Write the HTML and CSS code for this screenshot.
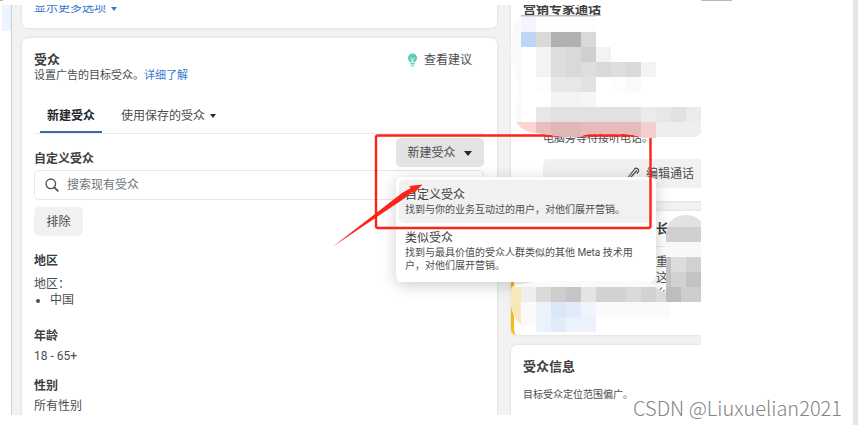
FILE: index.html
```
<!DOCTYPE html>
<html lang="zh-CN">
<head>
  <meta charset="UTF-8">
  <meta name="viewport" content="width=device-width, initial-scale=1.0">
  <title>受众</title>
  <link rel="stylesheet" href="styles.css">
</head>
<body>

<div class="page">
  <div class="rail"><div class="rail-active"></div></div>

  <div class="app">
    <div class="columns">
      <main class="main">
        <section class="card more-card">
          <a href="#" class="more-link">显示更多选项 <span class="caret small"></span></a>
        </section>

        <section class="card audience-card">
          <div class="title-row">
            <h2>受众</h2>
            <button type="button" class="tips">
              <svg width="11" height="14" viewBox="0 0 11 14">
                <path d="M5.500 0.500a4.600 4.600 0 0 0-4.600 4.600c0 1.900 1.200 2.700 2 4.100h5.200c.8-1.400 2-2.200 2-4.100a4.600 4.600 0 0 0-4.600-4.600z" fill="#62cdb7"/>
                <path d="M3.800 4.800l1.200 2v2.400M7.200 4.800l-1.200 2v2.400" fill="none" stroke="#e6f8f4" stroke-width="0.900"/>
                <path d="M3.200 10.500h4.600M3.600 12h3.800M4.600 13.300h1.800" stroke="#62cdb7" stroke-width="1"/>
              </svg>
              查看建议
            </button>
          </div>
          <p class="intro">设置广告的目标受众。<a href="#">详细了解</a></p>

          <div class="tabs">
            <button type="button" class="tab active">新建受众</button>
            <button type="button" class="tab">使用保存的受众 <span class="caret small"></span></button>
          </div>

          <div class="label-row">
            <label for="audienceSearch">自定义受众</label>
            <div class="create">
              <button type="button" class="create-button">新建受众 <span class="caret"></span></button>
              <div class="menu">
                <button type="button" class="menu-item selected">
                  <span class="menu-title">自定义受众</span>
                  <span class="menu-text">找到与你的业务互动过的用户，对他们展开营销。</span>
                </button>
                <button type="button" class="menu-item">
                  <span class="menu-title">类似受众</span>
                  <span class="menu-text">找到与最具价值的受众人群类似的其他 Meta 技术用户，对他们展开营销。</span>
                </button>
              </div>
            </div>
          </div>

          <div class="search">
            <svg width="14" height="14" viewBox="0 0 14 14">
              <circle cx="5.800" cy="5.800" r="4.800" fill="none" stroke="#4c5157" stroke-width="1.300"/>
              <path d="M9.300 9.300l4 4" stroke="#4c5157" stroke-width="1.700"/>
            </svg>
            <input type="text" id="audienceSearch" placeholder="搜索现有受众">
          </div>
          <button type="button" class="exclude">排除</button>

          <h3>地区</h3>
          <p class="value">地区：</p>
          <ul>
            <li>中国</li>
          </ul>

          <h3 class="after-list">年龄</h3>
          <p class="value tight">18 - 65+</p>

          <h3>性别</h3>
          <p class="value tight">所有性别</p>
        </section>
      </main>

      <aside class="side">
        <section class="card call-card">
          <h2>营销专家通话</h2>
          <div class="call-body">
            <p>电脑旁等待接听电话。</p>
            <button type="button" class="edit-call">
              <svg width="14" height="13" viewBox="0 0 14 13">
                <path d="M1 12l7.300-9.500a2.200 2.200 0 0 1 4 2.200l-1.500 2M3.300 12l7.500-8.500M1 12h2.300" fill="none" stroke="#4b4f56" stroke-width="1.200"/>
              </svg>
              编辑通话
            </button>
          </div>
        </section>

        <section class="card notice-card">
          <h2>长</h2>
          <p>重<br>这<br>么</p>
        </section>

        <section class="card info-card">
          <h2>受众信息</h2>
          <p>目标受众定位范围偏广。</p>
        </section>
      </aside>
    </div>
  </div>

  <div class="margin"></div>
  <div class="edge"></div>
</div>

<!-- red callout and arrow, then the pixelated areas above it -->
<svg class="notes" width="858" height="425" viewBox="0 0 858 425">
  <path d="M0 0.500h3M701 0.500h31" stroke="#b9b9b9"/>
  <rect x="376" y="135.500" width="274.500" height="92.500" rx="2" fill="none" stroke="#fb2418" stroke-width="2.400"/>
  <path d="M333 246.500L402 193l9-5-2-2 13.500-1.500-9.500 9.500-1-2-7 6z" fill="#fb2418"/>

  <defs>
    <clipPath id="blurTop">
      <path d="M521 16h180v117q-3 4-8 4h-37v1h-13q-10-4-20-4h-33q-6 0-9 2.500h-20q-12-2-25-3.500-14-1-20-11l1-4q-4-15 2-22l-1-10q-5-8-1-16-10-12-5-26-2-20 9-28z"/>
    </clipPath>
    <clipPath id="blurBottom">
      <path d="M512 287q14-6 45-6h87q8 0 12 6 4 5 10 5v-59q2-18 21-18 8 0 14 6v81h-31v16q0 8 20 14l-10 2h-144v-9h-15q-14-13-9-38z"/>
    </clipPath>
  </defs>

  <g clip-path="url(#blurTop)" shape-rendering="crispEdges">
    <path d="M505 16h16v106h-16z" fill="#fafafa"/>
    <path d="M521 16h180v121H521z" fill="#fff"/>
    <path d="M521 17h15v15h-15z" fill="#f3f6fe"/>
    <path d="M536 17h60v15h-60zM536 77h15v15h-15zM611 77h15v15h-15z" fill="#fdfdfd"/>
    <path d="M521 32h15v15h-15z" fill="#bfd5f5"/>
    <path d="M551 32h30v15h-30z" fill="#b1b1b1"/>
    <path d="M581 47h15v15h-15z" fill="#cfcfcf"/>
    <path d="M536 32h15v15h-15zM581 32h15v15h-15zM566 47h15v30h-15zM596 62h15v15h-15zM626 62h15v15h-15z" fill="#d9d9d9"/>
    <path d="M551 47h15v30h-15zM581 62h15v15h-15zM611 62h15v15h-15z" fill="#dedede"/>
    <path d="M536 47h15v30h-15zM596 47h15v15h-15zM641 62h15v15h-15zM551 92h30v15h-30z" fill="#f3f3f3"/>
    <path d="M551 77h30v15h-30zM536 107h15v15h-15zM656 107h15v15h-15z" fill="#e7e7e7"/>
    <path d="M581 77h15v15h-15z" fill="#e2e2e2"/>
    <path d="M626 77h15v15h-15z" fill="#fafafa"/>
    <path d="M581 92h15v15h-15z" fill="#f6f6f6"/>
    <path d="M551 107h90v15h-90zM671 107h15v15h-15z" fill="#e1e1e1"/>
    <path d="M641 107h15v15h-15zM686 107h15v15h-15z" fill="#ebebeb"/>
    <path d="M505 122h31v16h-31z" fill="#ffd3d1"/>
    <path d="M536 122h15v16h-15z" fill="#e9bdbb"/>
    <path d="M551 122h30v16h-30z" fill="#dfb8b6"/>
    <path d="M581 122h60v16h-60z" fill="#e5bcba"/>
    <path d="M641 122h15v16h-15z" fill="#f3cfcd"/>
    <path d="M656 122h45v16h-45z" fill="#eee"/>
  </g>
  <path d="M521 16h75M521 15.500h80" stroke="#bcbcbc"/>

  <g clip-path="url(#blurBottom)" shape-rendering="crispEdges">
    <path d="M505 280h165v52h-165z" fill="#fafafa"/>
    <path d="M505 287h16v40h-16z" fill="#f8e7b9"/>
    <path d="M521 287h15v15h-15z" fill="#eee"/>
    <path d="M536 287h15v15h-15zM656 287h10v15h-10zM626 287h15v15h-15z" fill="#dadada"/>
    <path d="M551 287h15v15h-15z" fill="#cdcdcd"/>
    <path d="M566 287h15v15h-15z" fill="#c5c5c5"/>
    <path d="M581 287h15v15h-15z" fill="#e4e4e4"/>
    <path d="M596 287h30v15h-30zM641 287h15v15h-15z" fill="#d2d2d2"/>
    <path d="M536 302h15v30h-15zM566 317h30v15h-30z" fill="#ecf2fb"/>
    <path d="M551 302h15v15h-15z" fill="#dbe7f6"/>
    <path d="M566 302h15v15h-15zM551 317h15v15h-15z" fill="#e3ebf8"/>
    <path d="M581 302h15v15h-15z" fill="#f1f5fb"/>
    <path d="M596 317h75v15h-75z" fill="#fff"/>
    <path d="M666 212h35v15h-35z" fill="#e2e2e2"/>
    <path d="M666 227h35v15h-35z" fill="#cfcfcf"/>
    <path d="M666 242h35v15h-35z" fill="#f8f8f8"/>
    <path d="M666 257h5v30h-5zM686 272h15v15h-15z" fill="#c3c3c3"/>
    <path d="M671 257h15v15h-15z" fill="#dcdcdc"/>
    <path d="M686 257h15v15h-15zM671 272h15v15h-15z" fill="#d1d1d1"/>
    <path d="M666 287h15v15h-15z" fill="#bdbdbd"/>
    <path d="M681 287h20v15h-20z" fill="#cdcdcd"/>
  </g>
</svg>

<div class="watermark">CSDN @Liuxuelian2021</div>

</body>
</html>
```
FILE: styles.css
```
* {
  box-sizing: border-box;
}

body {
  margin: 0;
  background-color: #fff;
  color: #4b4d50;
  font-family: Roboto, "Noto Sans CJK SC", sans-serif;
  font-size: 12px;
  line-height: 16px;
  overflow: hidden;
}

h2, h3, p, ul {
  margin: 0;
  padding: 0;
}

h2 {
  font-size: 13px;
  color: #3c3e42;
}

h3 {
  font-size: 12px;
  color: #3c3e42;
  margin-top: 14px;
}

a {
  color: #3876d3;
  text-decoration: none;
}

button {
  border: none;
  background: none;
  padding: 0;
  font: inherit;
  color: inherit;
  cursor: pointer;
}

.page {
  display: grid;
  grid-template-columns: 11px minmax(0, 1fr) 152px 5px;
  height: 100vh;
}

.rail {
  padding: 5px 0 0 2px;
}

.rail-active {
  height: 26px;
  background-color: #ebf4ff;
}

.app {
  height: calc(100vh - 15px);
  margin-top: 5px;
  padding-left: 10px;
  border-left: 1px solid #cfd3d4;
  background-color: #f1f3f3;
  overflow: hidden;
}

.edge {
  background-color: #e4e6ea;
}

/* the columns are scrolled up a little under the top edge */
.columns {
  display: grid;
  grid-template-columns: minmax(0, 1fr) 190px;
  gap: 14px;
  margin-top: -30px;
}

.main, .side {
  display: flex;
  flex-direction: column;
  gap: 10px;
}

.card {
  background-color: #fff;
  border-radius: 6px;
  padding: 14px 13px 12px 12px;
  box-shadow: 0 0 3px rgba(0, 0, 0, 0.12);
}

.side .card {
  border-radius: 6px 0 0 6px;
}

.caret {
  display: inline-block;
  border: 4px solid transparent;
  border-top: 5px solid #252729;
  border-bottom: 0;
  margin-left: 6px;
  vertical-align: middle;
}

.caret.small {
  border-width: 4px 3px 0;
  margin-left: 2px;
}

.more-card {
  padding: 25px 12px 12px;
}

.more-link {
  display: block;
}

.more-link .caret {
  border-top-color: #3876d3;
}

.audience-card {
  height: 420px;
}

.title-row {
  display: flex;
  justify-content: space-between;
  padding-right: 12px;
}

.tips {
  display: flex;
  align-items: center;
  gap: 6px;
}

.intro {
  font-size: 11px;
}

.tabs {
  display: flex;
  gap: 12px;
  height: 50px;
  padding: 16px 6px 0;
  border-bottom: 1px solid #e8eaec;
}

.tab {
  height: 33px;
  padding: 0 7px;
  border-bottom: 2px solid transparent;
}

.tab.active {
  color: #22262c;
  font-weight: bold;
  border-bottom-color: #4267b2;
}

.label-row {
  display: flex;
  justify-content: space-between;
  align-items: flex-end;
  padding-top: 4px;
}

.label-row label {
  font-weight: bold;
  color: #3c3e42;
}

.create {
  position: relative;
}

.create-button {
  width: 88px;
  height: 29px;
  border-radius: 5px;
  background-color: #e3e3e3;
}

.menu {
  position: absolute;
  z-index: 2;
  top: 39px;
  left: 0;
  width: 260px;
  padding: 3px;
  border-radius: 6px;
  background-color: #fff;
  box-shadow: 0 3px 16px rgba(0, 0, 0, 0.2);
}

.menu-item {
  display: block;
  width: 100%;
  padding: 7px 6px;
  border-radius: 5px;
  text-align: left;
}

.menu-item.selected {
  background-color: #f1f1f1;
}

.menu-item span {
  display: block;
}

.menu-title {
  color: #3c3e42;
}

.menu-text {
  width: 228px;
  font-size: 10px;
  line-height: 13px;
}

.search {
  display: flex;
  align-items: center;
  gap: 8px;
  height: 30px;
  margin-top: 3px;
  padding: 0 10px;
  border: 1px solid #e4e6e9;
  border-radius: 5px;
}

.search input {
  flex: 1;
  min-width: 0;
  border: none;
  padding: 0;
  outline: none;
  font: inherit;
}

.search input::placeholder {
  color: #6f747b;
}

.exclude {
  display: block;
  width: 49px;
  height: 29px;
  margin: 7px 0 17px;
  border-radius: 5px;
  background-color: #f1f1f1;
}

.value {
  margin-top: 7px;
}

.value.tight {
  margin-top: 4px;
}

ul {
  padding-left: 16px;
}

.after-list {
  margin-top: 20px;
}

.call-card {
  height: 226px;
  padding-top: 26px;
}

.call-body {
  padding: 114px 0 0 20px;
}

.call-body p {
  font-size: 11px;
}

.edit-call {
  display: flex;
  align-items: center;
  justify-content: flex-end;
  gap: 6px;
  width: calc(100% + 13px);
  height: 29px;
  margin-top: 12px;
  padding-right: 7px;
  border-radius: 5px 0 0 5px;
  background-color: #f1f1f1;
}

.notice-card {
  height: 124px;
  padding: 0;
  border-left: 3px solid #fcb813;
}

.notice-card h2 {
  height: 36px;
  padding: 10px 0 0 142px;
  border-bottom: 1px solid #e8eaec;
}

.notice-card p {
  padding: 7px 0 0 142px;
}

.info-card {
  height: 100px;
}

.info-card p {
  margin-top: 12px;
  font-size: 10px;
}

.notes {
  position: absolute;
  z-index: 3;
  top: 0;
  left: 0;
  pointer-events: none;
}

.watermark {
  position: absolute;
  z-index: 4;
  right: 16px;
  bottom: 4px;
  font-family: "Noto Sans CJK SC", sans-serif;
  font-size: 20px;
  font-weight: 300;
  line-height: 26px;
  color: #858585;
  text-shadow: 1px 1px 0 #fff;
}
```
